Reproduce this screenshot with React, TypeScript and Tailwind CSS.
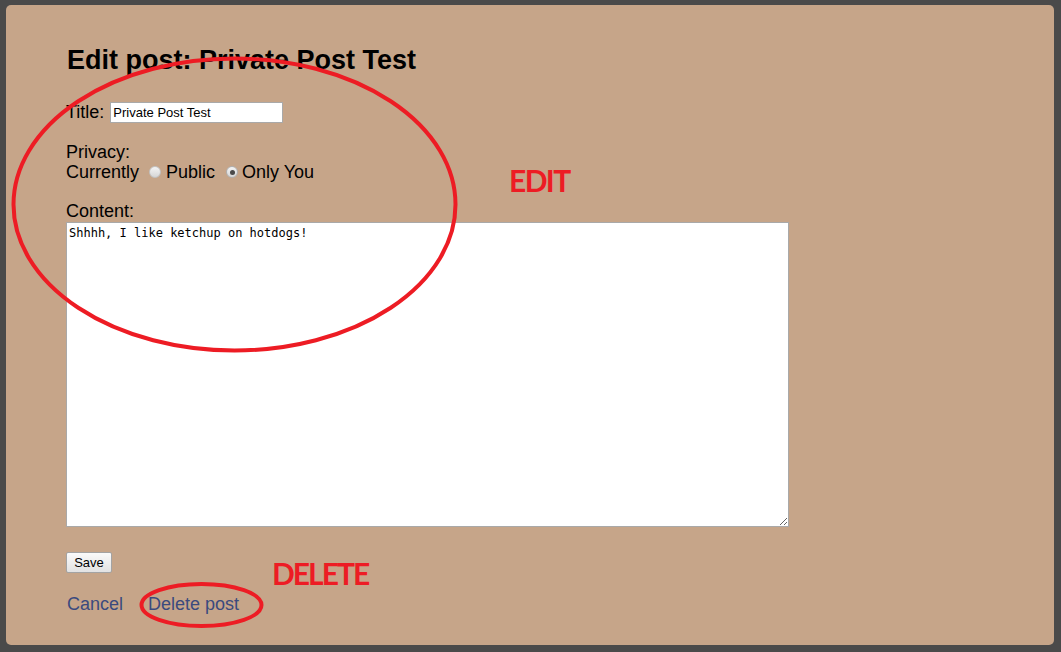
export default function App() {
  return (
    <div className="relative min-h-screen bg-[#4a4a4a] pt-[5px] pl-[6px] pr-[7px] pb-[7px]">
      <div className="relative h-[640px] rounded-[5px] bg-[#c6a589] pl-[60px] pt-[40px] text-black font-['Liberation_Sans',Arial,sans-serif]">
        <h1 className="ml-[1px] text-[27px] leading-[31px] font-bold">Edit post: Private Post Test</h1>

        {/* Title */}
        <div className="mt-[25px] flex items-center h-[22px] text-[18px] leading-[20px]">
          <span>Title:</span>
          <input
            type="text"
            defaultValue="Private Post Test"
            className="ml-[6px] h-[21px] w-[173px] border border-[#a9a9a9] bg-white px-[2px] text-[13px] outline-none"
          />
        </div>

        {/* Privacy */}
        <div className="mt-[19px] text-[18px] leading-[20px]">
          <div>Privacy:</div>
          <div className="flex items-center">
            <span>Currently</span>
            <span className="ml-[10px] h-[12px] w-[12px] rounded-full border border-[#c2c2c2] bg-gradient-to-b from-[#f4f4f4] to-[#d6d6d6]" />
            <span className="ml-[5px]">Public</span>
            <span className="ml-[11px] flex h-[12px] w-[12px] items-center justify-center rounded-full border border-[#b0b0b0] bg-gradient-to-b from-[#f4f4f4] to-[#d6d6d6]">
              <span className="h-[5px] w-[5px] rounded-full bg-[#4a4a4a]" />
            </span>
            <span className="ml-[4px]">Only You</span>
          </div>
        </div>

        {/* Content */}
        <div className="mt-[19px] text-[18px] leading-[20px]">Content:</div>
        <textarea
          defaultValue="Shhhh, I like ketchup on hotdogs!"
          className="mt-[1px] block h-[305px] w-[723px] border border-[#a9a9a9] bg-white px-[2px] py-[3px] text-[12px] leading-[15px] outline-none font-['DejaVu_Sans_Mono',monospace]"
        />

        <button className="mt-[25px] block h-[21px] w-[46px] rounded-[2px] border border-[#a3a3a3] bg-gradient-to-b from-[#fafafa] to-[#e2e2e2] text-[13px] leading-[19px]">
          Save
        </button>

        <div className="mt-[21px] flex text-[18px] leading-[20px] text-[#3a4a7e]">
          <a href="#" className="ml-[1px]">Cancel</a>
          <a href="#" className="ml-[25px]">Delete post</a>
        </div>

        {/* annotations */}
        <div className="absolute left-[503px] top-[160px] text-[30px] leading-none font-bold tracking-[-1.6px] text-[#ed1c24] font-['Lato',sans-serif]">
          EDIT
        </div>
        <div className="absolute left-[266px] top-[553px] text-[30px] leading-none font-bold tracking-[-2px] text-[#ed1c24] font-['Lato',sans-serif]">
          DELETE
        </div>
      </div>

      <svg className="pointer-events-none absolute left-0 top-0" width="1061" height="652">
        <ellipse cx="234.5" cy="204.5" rx="221" ry="146" fill="none" stroke="#ed1c24" strokeWidth="4" />
        <ellipse cx="201.5" cy="605" rx="60" ry="21" fill="none" stroke="#ed1c24" strokeWidth="4" />
      </svg>
    </div>
  );
}
